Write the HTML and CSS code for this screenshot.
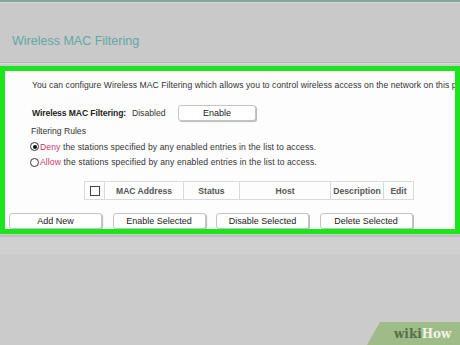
FILE: index.html
```html
<!DOCTYPE html>
<html>
<head>
<meta charset="utf-8">
<link rel="stylesheet" href="styles.css">
</head>
<body>
<div class="topline"></div>
<header class="header">
  <h1 class="title">Wireless MAC Filtering</h1>
</header>
<div class="sep"></div>
<section class="panel">
  <p class="intro">You can configure Wireless MAC Filtering which allows you to control wireless access on the network on this page.</p>
  <div class="status-row">
    <span class="label">Wireless MAC Filtering:</span>
    <span class="value">Disabled</span>
    <button class="btn btn-enable">Enable</button>
  </div>
  <div class="rules-title">Filtering Rules</div>
  <label class="radio-row"><span class="radio checked"></span><span class="hl">Deny</span>&nbsp;the stations specified by any enabled entries in the list to access.</label>
  <label class="radio-row"><span class="radio"></span><span class="hl">Allow</span>&nbsp;the stations specified by any enabled entries in the list to access.</label>
  <table class="mac-table">
    <tr>
      <th class="c-check"><span class="checkbox"></span></th>
      <th class="c-mac">MAC Address</th>
      <th class="c-status">Status</th>
      <th class="c-host">Host</th>
      <th class="c-desc">Description</th>
      <th class="c-edit">Edit</th>
    </tr>
  </table>
  <div class="actions">
    <button class="btn btn-action">Add New</button>
    <button class="btn btn-action">Enable Selected</button>
    <button class="btn btn-action">Disable Selected</button>
    <button class="btn btn-action">Delete Selected</button>
  </div>
</section>
<div class="below">
  <div class="below-line"></div>
  <div class="below-band"></div>
</div>
<div class="wikihow"><span class="wiki">wiki</span><span class="how">How</span></div>
</body>
</html>
```
FILE: styles.css
```css
html, body {
  margin: 0;
  padding: 0;
  background: #cbcbcb;
  width: 460px;
  height: 345px;
  overflow: hidden;
  font-family: "Liberation Sans", Arial, sans-serif;
}
.topline {
  height: 2px;
  background: #7fa89b;
  border-bottom: 1px solid #d6d6d6;
}
.header {
  height: 59px;
  background: #c9c9c9;
  display: flex;
  align-items: center;
}
.title {
  margin: 0 0 0 12px;
  padding-top: 17px;
  font-size: 12.5px;
  font-weight: normal;
  color: #62a6a6;
}
.sep {
  height: 1px;
  background: #b4b4b4;
  border-bottom: 1px solid #dcdcdc;
  margin-bottom: 2px;
}
.panel {
  border: 5px solid #1de51d;
  background: #fdfdfd;
  height: 158px;
  overflow: hidden;
  display: flex;
  flex-direction: column;
  align-items: flex-start;
  color: #333;
  font-size: 8.6px;
}
.intro {
  margin: 8px 0 0 27px;
  line-height: 12px;
  white-space: nowrap;
  letter-spacing: 0.05px;
}
.status-row {
  margin: 14px 0 0 27px;
  height: 16px;
  display: flex;
  align-items: center;
}
.label {
  font-weight: bold;
  color: #222;
  width: 100px;
  letter-spacing: -0.1px;
}
.value {
  width: 46px;
}
.btn {
  font-family: "Liberation Sans", Arial, sans-serif;
  font-size: 9px;
  color: #222;
  background: #fff;
  border: 1px solid #c4c4c4;
  border-radius: 3px;
  box-shadow: 1px 1px 1px #b8b8b8;
  padding: 0;
}
.btn-enable {
  width: 78px;
  height: 16px;
}
.rules-title {
  margin: 4px 0 0 26px;
  line-height: 12px;
}
.radio-row {
  margin-left: 25px;
  height: 16px;
  display: flex;
  align-items: center;
  white-space: nowrap;
  letter-spacing: 0.1px;
}
.rules-title + .radio-row {
  margin-top: 2px;
}
.radio {
  width: 7px;
  height: 7px;
  border: 1px solid #333;
  border-radius: 50%;
  margin-right: 1px;
  background: #fff;
  position: relative;
}
.radio.checked::after {
  content: "";
  position: absolute;
  left: 1.5px;
  top: 1.5px;
  width: 4px;
  height: 4px;
  border-radius: 50%;
  background: #111;
}
.hl {
  color: #c8356e;
}
.mac-table {
  margin: 11px 0 0 79px;
  border-collapse: collapse;
  width: 329px;
  table-layout: fixed;
}
.mac-table th {
  border: 1px solid #dadada;
  font-size: 8.6px;
  font-weight: bold;
  color: #555;
  padding: 0;
  height: 17px;
  text-align: center;
}
.c-check { width: 19px; }
.c-mac { width: 78px; }
.c-status { width: 55px; }
.c-host { width: 90px; }
.c-desc { width: 52px; }
.c-edit { width: 29px; }
.checkbox {
  display: inline-block;
  width: 8px;
  height: 8px;
  border: 1px solid #444;
  vertical-align: middle;
}
.actions {
  margin: 13px 0 0 4px;
  display: flex;
  gap: 10.5px;
}
.btn-action {
  width: 93px;
  height: 16px;
}
.below-line {
  height: 2px;
  background: #bdbdbd;
  margin-top: 1px;
}
.below-band {
  height: 17px;
  background: #d0d0d0;
}
.wikihow {
  position: absolute;
  right: 0;
  bottom: 0;
  width: 93px;
  height: 23px;
  background: #9fbb88;
  clip-path: polygon(13px 0, 100% 0, 100% 100%, 0 100%);
  font-family: "DejaVu Serif", "Liberation Serif", serif;
  font-weight: bold;
  font-size: 12px;
  display: flex;
  align-items: center;
  padding-left: 27px;
  box-sizing: border-box;
}
.wiki { color: #55704a; }
.how { color: #eef4e6; }
```
